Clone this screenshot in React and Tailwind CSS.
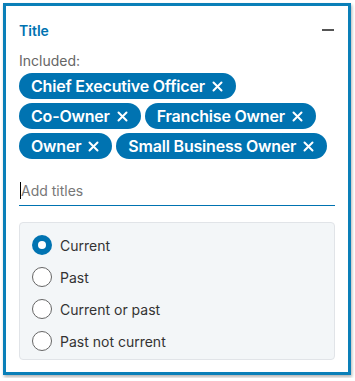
import React from "react";

const tags = [
  ["Chief Executive Officer"],
  ["Co-Owner", "Franchise Owner"],
  ["Owner", "Small Business Owner"],
];

const options = ["Current", "Past", "Current or past", "Past not current"];

function Tag({ label }) {
  return (
    <span className="inline-flex h-[26px] items-center rounded-full bg-[#0073b1] pl-[12px] pr-[13px] text-[16px] font-semibold tracking-[-0.2px] text-white">
      <span>{label}</span>
      <svg width="11" height="11" viewBox="0 0 11 11" className="ml-[7px]">
        <path d="M1.5 1.5 L9.5 9.5 M9.5 1.5 L1.5 9.5" stroke="white" strokeWidth="2" strokeLinecap="round" />
      </svg>
    </span>
  );
}

export default function App() {
  return (
    <div className="p-[3px]" style={{ fontFamily: "Inter, 'Noto Sans', sans-serif" }}>
      <div className="h-[372px] w-[348px] border-[3px] border-[#0a7fb8] bg-white pl-[13px] pr-[13px] pt-[14px] shadow-[1px_2px_3px_rgba(0,0,0,0.3)]">
        <div className="flex h-[20px] items-center justify-between">
          <span className="text-[14px] font-semibold text-[#0073b1]">Title</span>
          <span className="mr-[1px] block h-[2px] w-[12px] bg-[#555]" />
        </div>
        <div className="mt-[11px] text-[14px] leading-[20px] text-[#666]">Included:</div>
        <div className="mt-[2px] flex flex-col gap-[4px]">
          {tags.map((row, i) => (
            <div key={i} className="flex gap-[4px]">
              {row.map((t) => (
                <Tag key={t} label={t} />
              ))}
            </div>
          ))}
        </div>
        <div className="mt-[16px] flex h-[31px] items-center border-b border-[#0073b1]">
          <span className="ml-[1px] h-[17px] w-[1px] bg-black" />
          <span className="text-[14px] text-[#777]">Add titles</span>
        </div>
        <div className="mt-[16px] rounded-[4px] border border-[#e1e4e8] bg-[#f3f6f8] pb-[2px] pl-[12px] pt-[6px]">
          {options.map((o, i) => (
            <div key={o} className="flex h-[32px] items-center gap-[8px]">
              {i === 0 ? (
                <span className="flex h-[20px] w-[20px] items-center justify-center rounded-full bg-[#0073b1]">
                  <span className="h-[8px] w-[8px] rounded-full bg-white" />
                </span>
              ) : (
                <span className="h-[20px] w-[20px] rounded-full border border-[#666] bg-white" />
              )}
              <span className="text-[14px] text-[#333]">{o}</span>
            </div>
          ))}
        </div>
      </div>
    </div>
  );
}
